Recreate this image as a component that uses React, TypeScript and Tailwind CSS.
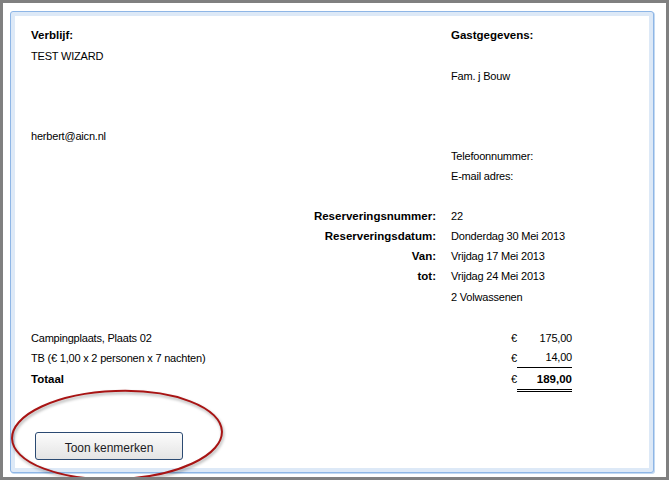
export default function App() {
  const regular = "text-[11px] tracking-[-0.2px] text-black";
  const bold = "text-[11.5px] font-bold text-black";

  return (
    <div
      className="relative h-[480px] w-[669px] overflow-hidden border-[3px] border-[#808080] bg-white pb-[4px] pl-[7px] pr-[12px] pt-[8px]"
      style={{ fontFamily: '"Liberation Sans", Arial, sans-serif' }}
    >
      <div className="h-full rounded-[3px] border border-[#8eb6e6] bg-[#dde9f7] p-1 shadow-[1px_1px_0_#c3d9f1]">
        <div className="h-full bg-white pl-4 pt-[9px]">
          {/* guest / stay info */}
          <div className="grid grid-cols-[405px_1fr] gap-x-[15px] leading-5">
            <div className={`${bold} h-[21px]`}>Verblijf:</div>
            <div className={`${bold} h-[21px]`}>Gastgegevens:</div>

            <div className={`${regular} h-5`}>TEST WIZARD</div>
            <div className="h-5" />

            <div className="h-5" />
            <div className={`${regular} h-5`}>Fam. j Bouw</div>

            <div className="h-5" />
            <div className="h-5" />
            <div className="h-5" />
            <div className="h-5" />

            <div className={`${regular} h-5`}>herbert@aicn.nl</div>
            <div className="h-5" />

            <div className="h-5" />
            <div className={`${regular} h-5`}>Telefoonnummer:</div>

            <div className="h-5" />
            <div className={`${regular} h-5`}>E-mail adres:</div>

            <div className="h-5" />
            <div className="h-5" />

            <div className={`${bold} h-5 text-right`}>Reserveringsnummer:</div>
            <div className={`${regular} h-5`}>22</div>

            <div className={`${bold} h-5 text-right`}>Reserveringsdatum:</div>
            <div className={`${regular} h-5`}>Donderdag 30 Mei 2013</div>

            <div className={`${bold} h-5 text-right`}>Van:</div>
            <div className={`${regular} h-5`}>Vrijdag 17 Mei 2013</div>

            <div className={`${bold} h-5 text-right`}>tot:</div>
            <div className={`${regular} h-5`}>Vrijdag 24 Mei 2013</div>

            <div className="mt-px h-5" />
            <div className={`${regular} mt-px h-5`}>2 Volwassenen</div>
          </div>

          {/* costs */}
          <div className="mt-[21px] grid grid-cols-[480px_6px_55px] leading-5">
            <div className={`${regular} h-5`}>Campingplaats, Plaats 02</div>
            <div className={`${regular} h-5`}>€</div>
            <div className={`${regular} h-5 text-right`}>175,00</div>

            <div className={`${regular} h-5`}>TB (€ 1,00 x 2 personen x 7 nachten)</div>
            <div className={`${regular} h-5`}>€</div>
            <div className={`${regular} h-5 border-b border-black text-right leading-[19px]`}>14,00</div>

            <div className={`${bold} h-[21px] pt-px`}>Totaal</div>
            <div className={`${regular} h-[21px] pt-px`}>€</div>
            <div className={`${bold} h-6 border-b-[3px] border-double border-black pt-px text-right`}>189,00</div>
          </div>

          <div className="mt-[40px] pl-1">
            <button className="flex h-[28px] w-[148px] items-center justify-center rounded-[3px] border border-[#2b4a72] bg-gradient-to-b from-[#fcfcfc] to-[#e4e4e4] pt-[3px] text-[12px] text-[#1b1b24]">
              Toon kenmerken
            </button>
          </div>
        </div>
      </div>

      {/* red annotation ring */}
      <svg
        className="pointer-events-none absolute left-0 top-0 h-[474px] w-[663px]"
        viewBox="0 0 663 474"
        style={{ filter: "drop-shadow(1px 2px 1.5px rgba(0,0,0,0.35))" }}
      >
        <ellipse
          cx="114"
          cy="432"
          rx="105"
          ry="44"
          transform="rotate(-2 114 432)"
          fill="none"
          stroke="#a81414"
          strokeWidth="2"
        />
      </svg>
    </div>
  );
}
